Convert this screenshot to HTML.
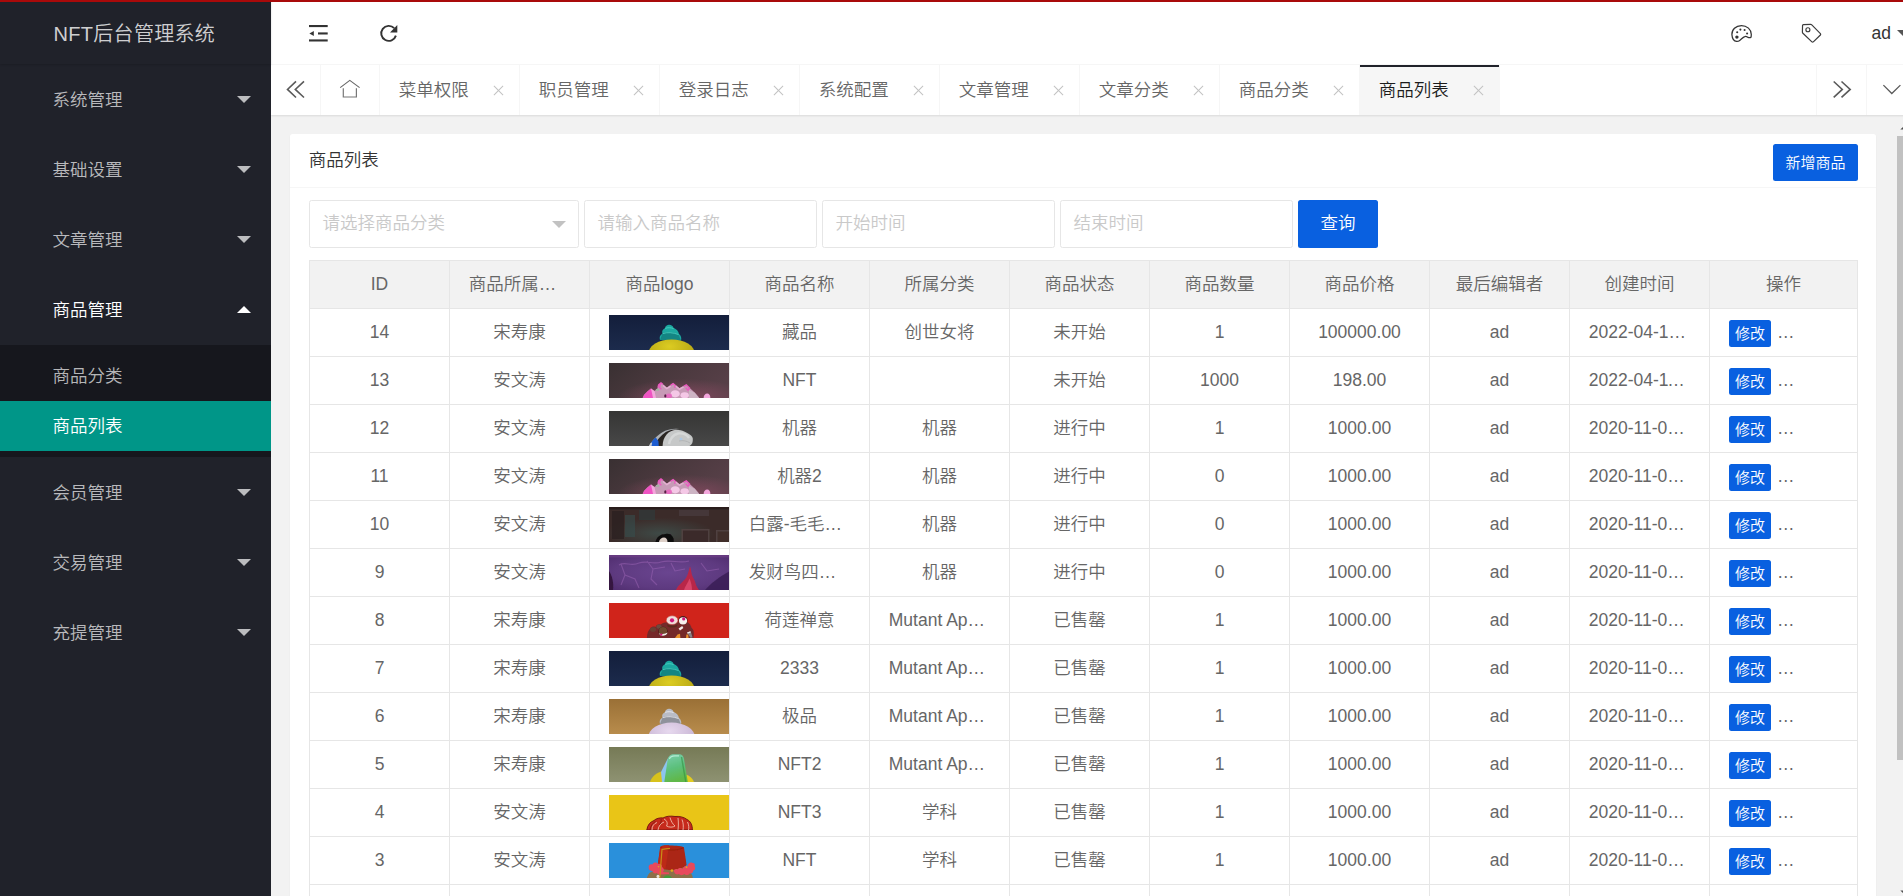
<!DOCTYPE html>
<html lang="zh-CN">
<head>
<meta charset="utf-8">
<title>NFT后台管理系统</title>
<style>
*{box-sizing:border-box;margin:0;padding:0}
html,body{width:1903px;height:896px;overflow:hidden;background:#f2f2f2}
body{position:relative;font-family:"Liberation Sans","Noto Sans CJK SC",sans-serif;font-size:17.5px;color:#333;line-height:1;font-weight:350}
#app{position:absolute;left:0;top:0;width:1917px;height:896px;overflow:hidden}
.abs{position:absolute}
/* top red bar */
#redbar{position:absolute;left:0;top:0;width:1917px;height:2px;background:#a90a0a;z-index:50}
/* side */
#side{position:absolute;left:0;top:0;width:271px;height:896px;background:#20222a;z-index:20}
#logo{position:absolute;left:0;top:0;width:271px;height:64px;line-height:68px;padding-left:53.5px;letter-spacing:.3px;font-size:20px;color:rgba(255,255,255,.8);box-shadow:0 1px 2px 0 rgba(0,0,0,.15);white-space:nowrap}
.mi{position:absolute;left:0;width:271px;height:70px;line-height:72px;padding-left:52.5px;color:rgba(255,255,255,.7);font-size:17.5px;white-space:nowrap}
.mi.open{color:#fff}
.mi i{position:absolute;left:236.5px;top:32px;width:0;height:0;border:7.5px solid transparent;border-top-color:rgba(255,255,255,.7)}
.mi.open i{top:24.5px;border-top-color:transparent;border-bottom-color:#fff}
#sub{position:absolute;left:0;top:345px;width:271px;height:112px;background:rgba(0,0,0,.3)}
.si{position:absolute;left:0;width:271px;height:50px;line-height:50px;padding-left:52.5px;color:rgba(255,255,255,.7);white-space:nowrap}
.si.on{background:#009688;color:#fff}
/* header */
#header{position:absolute;left:271px;top:0;width:1646px;height:65px;background:#fff;border-bottom:1px solid #f6f6f6;z-index:10}
#header svg{position:absolute;display:block}
#user{position:absolute;left:1600.5px;top:0;height:64px;line-height:67px;font-size:17.5px;color:#333;white-space:nowrap}
#user i{position:absolute;left:25.5px;top:30px;width:0;height:0;border:7.5px solid transparent;border-top-color:#555}
/* tabs */
#tabs{position:absolute;left:271px;top:65px;width:1646px;height:50px;background:#fff;box-shadow:0 1px 2px 0 rgba(0,0,0,.1);z-index:9}
.tc{position:absolute;top:0;height:50px;width:50px;border-color:#f6f6f6;border-style:solid;border-width:0}
.tab{position:absolute;top:0;height:50px;line-height:50px;border-right:1px solid #f6f6f6;color:#666;white-space:nowrap;padding-left:18.75px}
.tab.on{background:#f6f6f6;color:#1c1c1c}
.tab.on:after{content:"";position:absolute;left:0;top:0;width:100%;height:2px;background:#20222a}
.tab b{position:absolute;right:14px;top:18px;width:14px;height:14px;font-weight:normal}
.tab b:before,.tab b:after{content:"";position:absolute;left:6.5px;top:.5px;width:1px;height:13px;background:#c2c2c2;transform:rotate(45deg)}
.tab b:after{transform:rotate(-45deg)}
/* card */
#card{position:absolute;left:290px;top:134px;width:1586px;height:800px;background:#fff;border-radius:2.5px;box-shadow:0 1px 2px 0 rgba(0,0,0,.05)}
#chead{position:absolute;left:0;top:0;width:100%;height:54px;line-height:52px;padding-left:18.75px;border-bottom:1px solid #f6f6f6;color:#333}
.btn{position:absolute;background:#0960e0;color:#fff;text-align:center;border-radius:2.5px;white-space:nowrap}
.inp{position:absolute;top:66px;height:47.5px;line-height:45.5px;border:1px solid #e6e6e6;border-radius:2.5px;background:#fff;color:#c9c9c9;padding-left:12.5px;white-space:nowrap;overflow:hidden}
.inp i{position:absolute;right:12px;top:19.5px;width:0;height:0;border:7.5px solid transparent;border-top-color:#c2c2c2}
/* table */
#tbl{position:absolute;left:19px;top:126px;width:1549px;height:700px;border:1px solid #e6e6e6;border-bottom:0;background:#fff;color:#666}
.tr{position:absolute;left:0;width:1547px;height:48px;border-bottom:1px solid #e6e6e6}
.tr.h{background:#f2f2f2}
.td{position:absolute;top:0;height:47px;width:140px;border-right:1px solid #e6e6e6;line-height:46px;text-align:center;white-space:nowrap;overflow:hidden;padding:0 18.75px;text-overflow:ellipsis}
.td.last{width:147px;border-right:0;text-align:left;text-overflow:clip}
.c0{left:0}.c1{left:140px}.c2{left:280px}.c3{left:420px}.c4{left:560px}.c5{left:700px}.c6{left:840px}.c7{left:980px}.c8{left:1120px}.c9{left:1260px}.c10{left:1400px}
.td.img{padding:0;text-overflow:clip}
.pic{position:absolute;left:19px;top:6px;width:121px;height:35px;overflow:hidden}
.eb{position:absolute;left:19px;top:11px;width:42px;height:27px;line-height:28.5px;text-align:center;font-size:15px;background:#0960e0;color:#fff;border-radius:2.5px}
.el{position:absolute;left:67px;top:0}
/* scrollbar */
#sb{position:absolute;left:1897px;top:136px;width:20px;height:624px;background:#c1c1c1;z-index:5}
</style>
</head>
<body>
<div id="app">
<div id="redbar"></div>

<div id="side">
  <div id="logo">NFT后台管理系统</div>
  <div class="mi" style="top:64px">系统管理<i></i></div>
  <div class="mi" style="top:134px">基础设置<i></i></div>
  <div class="mi" style="top:204px">文章管理<i></i></div>
  <div class="mi open" style="top:274px">商品管理<i></i></div>
  <div id="sub">
    <div class="si" style="top:6px">商品分类</div>
    <div class="si on" style="top:56px">商品列表</div>
  </div>
  <div class="mi" style="top:457px">会员管理<i></i></div>
  <div class="mi" style="top:527px">交易管理<i></i></div>
  <div class="mi" style="top:597px">充提管理<i></i></div>
</div>

<div id="header">
  <svg style="left:0;top:0" width="1646" height="64" viewBox="271 0 1646 64" fill="none" stroke="#333">
    <g fill="#333" stroke="none"><rect x="309" y="25" width="18.7" height="2.1"/><rect x="318" y="32.4" width="9.7" height="2.1"/><rect x="309" y="39.4" width="18.7" height="2.1"/><path d="M309.4 33.5 L313.8 30.9 L313.8 36.1 Z"/></g>
    <path d="M394.2 28.2 A7.5 7.5 0 1 0 395.9 35.6" stroke-width="1.9"/>
    <path d="M397.3 25.1 L397.3 32.4 L390 32.4 Z" fill="#333" stroke="none"/>
    <path d="M1750.8 37.4 C1749.5 38 1748.3 37.4 1747.4 37 C1746.5 36.5 1745.6 36.3 1744.8 36.6 C1742.8 37.2 1741.5 39.2 1739.7 40.4 C1738.5 41.3 1737.5 41.5 1736.6 41.4 C1734 41.1 1732.2 38.2 1731.9 34.6 C1731.6 29.6 1735.8 25.5 1741.4 25.5 C1747 25.5 1751.3 29.5 1751.3 34.4 C1751.3 35.8 1751.2 36.8 1750.8 37.4 Z" stroke-width="1.25" stroke-linejoin="round"/>
    <g fill="#333" stroke="none"><circle cx="1736.9" cy="37.1" r="1.7"/><circle cx="1737.2" cy="32.2" r="1.05"/><circle cx="1740.4" cy="29.6" r="1.05"/><circle cx="1744.6" cy="30.05" r="1.05"/><circle cx="1747.1" cy="33.5" r="1.05"/></g>
    <path d="M1803.4 24.55 L1810.6 24.4 Q1811.3 24.4 1811.8 24.9 L1820.4 33.7 Q1821 34.4 1820.4 35 L1813.3 41.9 Q1812.6 42.5 1811.9 41.9 L1802.9 33.2 Q1802.4 32.7 1802.4 32 L1802.55 25.4 Q1802.6 24.6 1803.4 24.55 Z" stroke="#3c3c3c" stroke-width="1.2" stroke-linejoin="round"/>
    <circle cx="1807.9" cy="29.7" r="2" stroke="#3c3c3c" stroke-width="1.15"/>
  </svg>
    <div id="user">ad<i></i></div>
</div>

<div id="tabs">
  <svg style="position:absolute;left:0;top:0;display:block" width="1646" height="50" viewBox="0 0 1646 50" fill="none" stroke="#5a5a5a" stroke-width="1.6">
    <path d="M25 16.3 L16.5 24.4 L25 32.5 M33 16.3 L24.3 24.4 L33 32.5"/>
    <path d="M1562.7 16.5 L1571.3 24.4 L1562.7 32.4 M1570.5 16.5 L1579.2 24.4 L1570.5 32.4"/>
    <path d="M1612.4 20.1 L1620.8 28.5 L1629.4 20.1" stroke-width="1.3"/>
    <path d="M69.2 22.6 L78.8 15.4 L88.6 22.6" stroke="#666" stroke-width="1.1"/>
    <path d="M72.3 23.2 V32 H85.4 V23.2" stroke="#777" stroke-width="1.2"/>
  </svg>
  <div class="tc" style="left:0;border-right-width:1px"></div>
  <div class="tab" style="left:50px;width:59px"></div>
  <div class="tab" style="left:109px;width:140px">菜单权限<b></b></div>
  <div class="tab" style="left:249px;width:140px">职员管理<b></b></div>
  <div class="tab" style="left:389px;width:140px">登录日志<b></b></div>
  <div class="tab" style="left:529px;width:140px">系统配置<b></b></div>
  <div class="tab" style="left:669px;width:140px">文章管理<b></b></div>
  <div class="tab" style="left:809px;width:140px">文章分类<b></b></div>
  <div class="tab" style="left:949px;width:140px">商品分类<b></b></div>
  <div class="tab on" style="left:1089px;width:140px">商品列表<b></b></div>
  <div class="tc" style="left:1545px;border-left-width:1px"></div>
  <div class="tc" style="left:1595px;border-left-width:1px"></div>
</div>

<div id="card">
  <div id="chead">商品列表</div>
  <div class="btn" style="left:1483px;top:10px;width:85px;height:37px;line-height:37px;font-size:15px">新增商品</div>
  <div class="inp" style="left:19px;width:270px">请选择商品分类<i></i></div>
  <div class="inp" style="left:294px;width:233px">请输入商品名称</div>
  <div class="inp" style="left:532px;width:233px">开始时间</div>
  <div class="inp" style="left:770px;width:233px">结束时间</div>
  <div class="btn" style="left:1008px;top:66px;width:80px;height:47.5px;line-height:46px">查询</div>

  <div id="tbl">
    <div class="tr h" style="top:0">
      <div class="td c0">ID</div><div class="td c1">商品所属用户</div><div class="td c2">商品logo</div><div class="td c3">商品名称</div><div class="td c4">所属分类</div><div class="td c5">商品状态</div><div class="td c6">商品数量</div><div class="td c7">商品价格</div><div class="td c8">最后编辑者</div><div class="td c9">创建时间</div><div class="td c10 last" style="text-align:center">操作</div>
    </div>
    <div class="tr" style="top:48px"><div class="td c0">14</div><div class="td c1">宋寿康</div><div class="td c2 img"><svg class="pic" viewBox="0 0 121 35" width="121" height="35" preserveAspectRatio="none"><defs><linearGradient id="g1" x1="0" y1="0" x2="0" y2="1"><stop offset="0" stop-color="#131e3b"/><stop offset="1" stop-color="#1c2b4c"/></linearGradient><radialGradient id="g2" cx=".45" cy=".25" r=".7"><stop offset="0" stop-color="#dccc22"/><stop offset="1" stop-color="#b0a012"/></radialGradient></defs><rect width="121" height="35" fill="url(#g1)"/><path d="M51 25 C50 21 52 19.5 53.5 18.5 C52.5 15.5 54.5 14 56 13.3 C56 10.8 58.5 9.6 60.2 9.7 C62.5 9.8 64 11 64.5 12.8 C67.5 14 69.5 16.5 70 19 C72 20.5 72.8 23 72 25.5 Z" fill="#1ca8a0"/><path d="M53.5 18.5 C57 16.5 63 16.5 69.5 19.5 L72 25.5 L51 25 Z" fill="#148583"/><path d="M56.2 13.4 C59 12.3 62 12.6 64.6 13.6 M53.8 18.6 C58 17 64 17.4 69.6 19.6" stroke="#4fd8c8" stroke-width="1" fill="none" opacity=".75"/><ellipse cx="62.6" cy="38.6" rx="23.2" ry="14.2" fill="url(#g2)"/></svg></div><div class="td c3">藏品</div><div class="td c4">创世女将</div><div class="td c5">未开始</div><div class="td c6">1</div><div class="td c7">100000.00</div><div class="td c8">ad</div><div class="td c9">2022-04-12 15:32:10</div><div class="td c10 last"><span class="eb">修改</span><span class="el">…</span></div></div>
    <div class="tr" style="top:96px"><div class="td c0">13</div><div class="td c1">安文涛</div><div class="td c2 img"><svg class="pic" viewBox="0 0 121 35" width="121" height="35" preserveAspectRatio="none"><defs><linearGradient id="g3" x1="0" y1="0" x2="1" y2=".35"><stop offset="0" stop-color="#393032"/><stop offset=".5" stop-color="#49383d"/><stop offset="1" stop-color="#563f47"/></linearGradient><radialGradient id="g4" cx=".62" cy="1" r=".55"><stop offset="0" stop-color="#a0506e" stop-opacity=".6"/><stop offset="1" stop-color="#a0506e" stop-opacity="0"/></radialGradient><filter id="g5" x="-5%" y="-20%" width="110%" height="140%"><feGaussianBlur stdDeviation=".55"/></filter></defs><rect width="121" height="35" fill="url(#g3)"/><rect width="121" height="35" fill="url(#g4)"/><g filter="url(#g5)"><path d="M33.7 35 L35 32 L38.4 28.5 L42 25.6 L45 28 L48 26.5 L49.5 22 L52 19.8 L55 22 L57.8 24.8 L61 22.5 L64.1 20.6 L67 22.6 L70.4 25.3 L74 23.4 L77.3 21.9 L81 25.3 L85.7 29.5 L89.9 34.3 L90 35 Z" fill="#c79ab6"/><path d="M33.7 35 L35 32 L38.4 28.5 L42 25.6 L44 28 L46.5 35 Z" fill="#ef52c2"/><path d="M42 25.6 L45.5 28 L47 35 L44 35 Z" fill="#f3a6dc"/><path d="M49 24.5 L49.6 21.8 L52 19.8 L54 21.4 M51.6 20.2 L50.6 24.6 L52.4 26.2" stroke="#ec58c0" stroke-width="1.3" fill="none"/><path d="M61.6 22.4 L64.1 20.6 L66.6 22.6 L65.4 24.6" stroke="#ec58c0" stroke-width="1.3" fill="none"/><path d="M74.6 23.4 L77.3 21.9 L80.6 25 L79 27.2 L76.6 24.6" stroke="#ec58c0" stroke-width="1.3" fill="none"/><path d="M54 22.5 L57.8 25.6 L61.6 23 M66.8 23 L70.4 26.2 L74.6 23.8" stroke="#e9b4d6" stroke-width="1.6" fill="none" opacity=".85"/><ellipse cx="66.2" cy="30.8" rx="4.6" ry="3.6" fill="#fbd0ee" opacity=".85"/><ellipse cx="75.7" cy="32.2" rx="4.2" ry="3" fill="#fbd0ee" opacity=".85"/><ellipse cx="60" cy="33" rx="3" ry="2.4" fill="#ec62c2" opacity=".8"/><path d="M80 27 L85.7 29.8 L89.6 34.6 L89.6 35 L80 35 Z" fill="#cdb4c4"/><ellipse cx="48.4" cy="26.9" rx="1.8" ry="1.2" fill="#a8b0a4"/><ellipse cx="56.3" cy="32.9" rx="1.1" ry="1.6" fill="#5a1e46"/><path d="M94.6 35 C94.6 32.4 96.4 30.6 98.2 30.6 C100 30.6 101.4 32.4 101.4 35 Z" fill="#f3a6dc"/></g></svg></div><div class="td c3">NFT</div><div class="td c4"></div><div class="td c5">未开始</div><div class="td c6">1000</div><div class="td c7">198.00</div><div class="td c8">ad</div><div class="td c9">2022-04-11 10:21:45</div><div class="td c10 last"><span class="eb">修改</span><span class="el">…</span></div></div>
    <div class="tr" style="top:144px"><div class="td c0">12</div><div class="td c1">安文涛</div><div class="td c2 img"><svg class="pic" viewBox="0 0 121 35" width="121" height="35" preserveAspectRatio="none"><defs><linearGradient id="g6" x1="0" y1="0" x2="0" y2="1"><stop offset="0" stop-color="#353534"/><stop offset="1" stop-color="#484848"/></linearGradient><filter id="g7" x="-5%" y="-20%" width="110%" height="140%"><feGaussianBlur stdDeviation=".5"/></filter></defs><rect width="121" height="35" fill="url(#g6)"/><g filter="url(#g7)"><path d="M40 35 C43 30 48 24.5 53 21.5 C57 19 62 18 67 17.8 L70.4 18 C64 19 58.5 22 55 27 C53.5 29.5 53 32 53.2 35 Z" fill="#aeb2b6"/><path d="M44.5 35 C48 29 52 24.5 56.8 21 C60.5 18.8 65 18.2 70.4 18.2 C65 19.6 60 22.4 57 26.6 C55.2 29.2 54.4 32 54.4 35 Z" fill="#2a2624"/><path d="M53.6 35 C53.8 30 55 26.5 57.6 23.4 C60 20.8 63.5 19 67.3 18.8 C70.5 18.8 73 19.6 75.2 20.6 C78 22 80.5 23.4 82 24.6 C83.4 25.8 84 27.4 83.8 28.8 C83.8 30.5 83.4 32 83 32.6 C82.4 33.8 81.4 34.6 80.4 35 Z" fill="#c6c8c8"/><path d="M60 33 C61 28 64 24 69 22.5 C74 22 78 24 80 27" stroke="#dadcdc" stroke-width="2.4" fill="none" opacity=".8"/><path d="M70 30 C74 29 78 30 81 32" stroke="#aeb0b2" stroke-width="1" fill="none" opacity=".8"/><ellipse cx="72" cy="28" rx="1.4" ry="1.2" fill="#a8c8ea" opacity=".8"/><path d="M41 35 L42.5 31 L45.5 27.6 L47 26.6 L48 28.4 L49.4 30 L49.8 35 Z" fill="#1a5cd0"/><path d="M40 35 L41.6 32 L43.2 31.4 L42.6 35 Z" fill="#c8ccd0"/></g></svg></div><div class="td c3">机器</div><div class="td c4">机器</div><div class="td c5">进行中</div><div class="td c6">1</div><div class="td c7">1000.00</div><div class="td c8">ad</div><div class="td c9">2020-11-06 14:20:11</div><div class="td c10 last"><span class="eb">修改</span><span class="el">…</span></div></div>
    <div class="tr" style="top:192px"><div class="td c0">11</div><div class="td c1">安文涛</div><div class="td c2 img"><svg class="pic" viewBox="0 0 121 35" width="121" height="35" preserveAspectRatio="none"><defs><linearGradient id="g8" x1="0" y1="0" x2="1" y2=".35"><stop offset="0" stop-color="#393032"/><stop offset=".5" stop-color="#49383d"/><stop offset="1" stop-color="#563f47"/></linearGradient><radialGradient id="g9" cx=".62" cy="1" r=".55"><stop offset="0" stop-color="#a0506e" stop-opacity=".6"/><stop offset="1" stop-color="#a0506e" stop-opacity="0"/></radialGradient><filter id="g10" x="-5%" y="-20%" width="110%" height="140%"><feGaussianBlur stdDeviation=".55"/></filter></defs><rect width="121" height="35" fill="url(#g8)"/><rect width="121" height="35" fill="url(#g9)"/><g filter="url(#g10)"><path d="M33.7 35 L35 32 L38.4 28.5 L42 25.6 L45 28 L48 26.5 L49.5 22 L52 19.8 L55 22 L57.8 24.8 L61 22.5 L64.1 20.6 L67 22.6 L70.4 25.3 L74 23.4 L77.3 21.9 L81 25.3 L85.7 29.5 L89.9 34.3 L90 35 Z" fill="#c79ab6"/><path d="M33.7 35 L35 32 L38.4 28.5 L42 25.6 L44 28 L46.5 35 Z" fill="#ef52c2"/><path d="M42 25.6 L45.5 28 L47 35 L44 35 Z" fill="#f3a6dc"/><path d="M49 24.5 L49.6 21.8 L52 19.8 L54 21.4 M51.6 20.2 L50.6 24.6 L52.4 26.2" stroke="#ec58c0" stroke-width="1.3" fill="none"/><path d="M61.6 22.4 L64.1 20.6 L66.6 22.6 L65.4 24.6" stroke="#ec58c0" stroke-width="1.3" fill="none"/><path d="M74.6 23.4 L77.3 21.9 L80.6 25 L79 27.2 L76.6 24.6" stroke="#ec58c0" stroke-width="1.3" fill="none"/><path d="M54 22.5 L57.8 25.6 L61.6 23 M66.8 23 L70.4 26.2 L74.6 23.8" stroke="#e9b4d6" stroke-width="1.6" fill="none" opacity=".85"/><ellipse cx="66.2" cy="30.8" rx="4.6" ry="3.6" fill="#fbd0ee" opacity=".85"/><ellipse cx="75.7" cy="32.2" rx="4.2" ry="3" fill="#fbd0ee" opacity=".85"/><ellipse cx="60" cy="33" rx="3" ry="2.4" fill="#ec62c2" opacity=".8"/><path d="M80 27 L85.7 29.8 L89.6 34.6 L89.6 35 L80 35 Z" fill="#cdb4c4"/><ellipse cx="48.4" cy="26.9" rx="1.8" ry="1.2" fill="#a8b0a4"/><ellipse cx="56.3" cy="32.9" rx="1.1" ry="1.6" fill="#5a1e46"/><path d="M94.6 35 C94.6 32.4 96.4 30.6 98.2 30.6 C100 30.6 101.4 32.4 101.4 35 Z" fill="#f3a6dc"/></g></svg></div><div class="td c3">机器2</div><div class="td c4">机器</div><div class="td c5">进行中</div><div class="td c6">0</div><div class="td c7">1000.00</div><div class="td c8">ad</div><div class="td c9">2020-11-06 14:18:32</div><div class="td c10 last"><span class="eb">修改</span><span class="el">…</span></div></div>
    <div class="tr" style="top:240px"><div class="td c0">10</div><div class="td c1">安文涛</div><div class="td c2 img"><svg class="pic" viewBox="0 0 121 35" width="121" height="35" preserveAspectRatio="none"><defs><radialGradient id="g11" cx=".42" cy=".75" r=".45"><stop offset="0" stop-color="#3f5450" stop-opacity=".75"/><stop offset="1" stop-color="#3f5450" stop-opacity="0"/></radialGradient><filter id="g12" x="-5%" y="-20%" width="110%" height="140%"><feGaussianBlur stdDeviation=".5"/></filter></defs><rect width="121" height="35" fill="#3b2b29"/><rect width="121" height="35" fill="url(#g11)"/><g filter="url(#g12)"><rect x="0" y="0" width="121" height="2.5" fill="#1c1414" opacity=".6"/><rect x="3" y="4" width="12" height="28" fill="#2c2020" opacity=".8"/><rect x="16" y="8" width="10" height="22" fill="#34504e" opacity=".55"/><rect x="30" y="3" width="16" height="10" fill="#2e3c3c" opacity=".6"/><rect x="72.5" y="22" width="28" height="13" fill="#4f413f"/><rect x="74" y="23.5" width="25" height="11.5" fill="#3a2c2c"/><rect x="107" y="23" width="14" height="12" fill="#4f413f"/><rect x="108.5" y="24.5" width="12.5" height="10.5" fill="#402e2a"/><rect x="70" y="3" width="30" height="6" fill="#4a3c3e" opacity=".7"/><path d="M46.5 35 C47.5 30 51.5 27 56.5 27 C60 26.5 62.5 27.5 63 29 C64.5 30.5 65 33 64.8 35 Z" fill="#0d0a0b"/><path d="M50 35 C50.5 32 52.5 30.5 55 30.5 C57 30.5 58.5 32 58.5 35 Z" fill="#ddd0c8"/></g></svg></div><div class="td c3">白露-毛毛虫系列</div><div class="td c4">机器</div><div class="td c5">进行中</div><div class="td c6">0</div><div class="td c7">1000.00</div><div class="td c8">ad</div><div class="td c9">2020-11-06 14:15:08</div><div class="td c10 last"><span class="eb">修改</span><span class="el">…</span></div></div>
    <div class="tr" style="top:288px"><div class="td c0">9</div><div class="td c1">安文涛</div><div class="td c2 img"><svg class="pic" viewBox="0 0 121 35" width="121" height="35" preserveAspectRatio="none"><defs><radialGradient id="g13" cx=".5" cy=".5" r=".75"><stop offset="0" stop-color="#6a4590"/><stop offset=".6" stop-color="#5e3a80"/><stop offset="1" stop-color="#4c2a6a"/></radialGradient><filter id="g14" x="-5%" y="-20%" width="110%" height="140%"><feGaussianBlur stdDeviation=".5"/></filter></defs><rect width="121" height="35" fill="url(#g13)"/><g filter="url(#g14)"><path d="M10 10 C16 6 22 12 30 8 C38 5 44 10 52 7 C62 4 70 9 80 6 M12 9 L16 20 L12 30 M16 20 L26 24 L30 33 M38 6 L44 14 L56 12 M44 14 L42 24 L48 30 M62 8 L66 16 L76 14 M92 8 L98 16 L110 14" stroke="#b070c4" stroke-width="1.1" fill="none" opacity=".38"/><path d="M0 16 C3 20 5 28 4 35 L0 35 Z" fill="#34183f"/><path d="M96 35 C102 28 110 22 121 16 L121 35 Z" fill="#3c2058" opacity=".9"/><path d="M0 0 L121 0 L121 2.5 L0 2.5 Z" fill="#6e3f86" opacity=".7"/><path d="M67 35 C69 30 74 27 77 23 C79.5 19 80 14 81 11.3 C82.5 15 82 19 84 22.5 C86 26 86.5 28 87 30 C88 32 89 33.5 90 35 Z" fill="#b82848"/><path d="M75 35 C76 31 79 28 80.5 23.5 C82 27 83 31 83 35 Z" fill="#d8446a"/></g></svg></div><div class="td c3">发财鸟四季系列</div><div class="td c4">机器</div><div class="td c5">进行中</div><div class="td c6">0</div><div class="td c7">1000.00</div><div class="td c8">ad</div><div class="td c9">2020-11-06 14:12:40</div><div class="td c10 last"><span class="eb">修改</span><span class="el">…</span></div></div>
    <div class="tr" style="top:336px"><div class="td c0">8</div><div class="td c1">宋寿康</div><div class="td c2 img"><svg class="pic" viewBox="0 0 121 35" width="121" height="35" preserveAspectRatio="none"><defs><filter id="g15" x="-5%" y="-20%" width="110%" height="140%"><feGaussianBlur stdDeviation=".35"/></filter></defs><rect width="121" height="35" fill="#d0241b"/><g filter="url(#g15)"><path d="M37.9 35 C38 31 39 27.5 41 25.7 C42.5 23.5 45 23.2 46.5 24 C47 21.8 49.5 20.6 51.5 21.4 C53.5 20 56 19.2 58 19.2 L78.5 19 C80.5 20.5 82 22.5 82.5 24.8 C84 26 84.9 27.8 84.7 29.2 C85 31 84.8 33 84.3 35 Z" fill="#742a2c"/><ellipse cx="44" cy="26.5" rx="3" ry="2.3" fill="#6a4032"/><ellipse cx="50" cy="23.6" rx="2.6" ry="2.2" fill="#6e4a3c"/><path d="M58 21.3 C60.5 23.2 66 23.2 68.6 21.4 L68 23.6 C65 24.8 61 24.8 58.6 23.4 Z" fill="#5a2a1c"/><ellipse cx="63.1" cy="17.2" rx="5.8" ry="4.4" fill="#f0dedb"/><ellipse cx="63.1" cy="17.2" rx="5.8" ry="4.4" fill="none" stroke="#c4504a" stroke-width=".6"/><circle cx="63" cy="17.3" r="2.1" fill="#d01878"/><ellipse cx="74" cy="17.2" rx="4.6" ry="4.3" fill="#4a1c18"/><ellipse cx="74" cy="17.8" rx="4.1" ry="3.6" fill="#f6f2f0"/><circle cx="74.7" cy="15.9" r="1.6" fill="#d01878"/><circle cx="54" cy="28.4" r="4.6" fill="#3a1612"/><circle cx="54" cy="28.2" r="4.1" fill="#70482e"/><path d="M49.8 30.2 C51 33.6 57.5 33.8 58.6 29.6 C56.5 31.2 52.5 31.6 49.8 30.2 Z" fill="#f2ece8"/><circle cx="52.2" cy="31.6" r="1.2" fill="#d01878"/><path d="M69.6 25.6 L73.2 23 L74.4 25 L71 27.4 Z" fill="#f2ece8"/><path d="M66 35 L68.5 31.4 L71 30.8 L71.4 35 Z" fill="#e8922e"/><path d="M77 35 L77.4 31.6 L79.2 31.4 L79.6 35 Z" fill="#e8922e"/><path d="M78.2 29.6 L81.6 28.2 L83.6 34.4 L81.4 34.8 Z" fill="#8a8486"/><path d="M78 29.4 L81.4 28.2 L81.8 29.6 L78.6 30.8 Z" fill="#efe8e6"/></g></svg></div><div class="td c3">荷莲禅意</div><div class="td c4">Mutant Ape Yacht Club</div><div class="td c5">已售罄</div><div class="td c6">1</div><div class="td c7">1000.00</div><div class="td c8">ad</div><div class="td c9">2020-11-05 18:02:13</div><div class="td c10 last"><span class="eb">修改</span><span class="el">…</span></div></div>
    <div class="tr" style="top:384px"><div class="td c0">7</div><div class="td c1">宋寿康</div><div class="td c2 img"><svg class="pic" viewBox="0 0 121 35" width="121" height="35" preserveAspectRatio="none"><defs><linearGradient id="g16" x1="0" y1="0" x2="0" y2="1"><stop offset="0" stop-color="#131e3b"/><stop offset="1" stop-color="#1c2b4c"/></linearGradient><radialGradient id="g17" cx=".45" cy=".25" r=".7"><stop offset="0" stop-color="#dccc22"/><stop offset="1" stop-color="#b0a012"/></radialGradient></defs><rect width="121" height="35" fill="url(#g16)"/><path d="M51 25 C50 21 52 19.5 53.5 18.5 C52.5 15.5 54.5 14 56 13.3 C56 10.8 58.5 9.6 60.2 9.7 C62.5 9.8 64 11 64.5 12.8 C67.5 14 69.5 16.5 70 19 C72 20.5 72.8 23 72 25.5 Z" fill="#1ca8a0"/><path d="M53.5 18.5 C57 16.5 63 16.5 69.5 19.5 L72 25.5 L51 25 Z" fill="#148583"/><path d="M56.2 13.4 C59 12.3 62 12.6 64.6 13.6 M53.8 18.6 C58 17 64 17.4 69.6 19.6" stroke="#4fd8c8" stroke-width="1" fill="none" opacity=".75"/><ellipse cx="62.6" cy="38.6" rx="23.2" ry="14.2" fill="url(#g17)"/></svg></div><div class="td c3">2333</div><div class="td c4">Mutant Ape Yacht Club</div><div class="td c5">已售罄</div><div class="td c6">1</div><div class="td c7">1000.00</div><div class="td c8">ad</div><div class="td c9">2020-11-05 17:55:27</div><div class="td c10 last"><span class="eb">修改</span><span class="el">…</span></div></div>
    <div class="tr" style="top:432px"><div class="td c0">6</div><div class="td c1">宋寿康</div><div class="td c2 img"><svg class="pic" viewBox="0 0 121 35" width="121" height="35" preserveAspectRatio="none"><defs><linearGradient id="g18" x1="0" y1="0" x2="0" y2="1"><stop offset="0" stop-color="#9a7036"/><stop offset="1" stop-color="#b88c4c"/></linearGradient><radialGradient id="g19" cx=".45" cy=".3" r=".7"><stop offset="0" stop-color="#e6d8ee"/><stop offset="1" stop-color="#c4b0d0"/></radialGradient></defs><rect width="121" height="35" fill="url(#g18)"/><path d="M51 25 C50 21 52 19.5 53.5 18.5 C52.5 15.5 54.5 14 56 13.3 C56 10.8 58.5 9.6 60.2 9.7 C62.5 9.8 64 11 64.5 12.8 C67.5 14 69.5 16.5 70 19 C72 20.5 72.8 23 72 25.5 Z" fill="#b9bcc6"/><path d="M53.5 18.5 C57 16.5 63 16.5 69.5 19.5 L72 25.5 L51 25 Z" fill="#8f929c"/><path d="M56.2 13.4 C59 12.3 62 12.6 64.6 13.6 M53.8 18.6 C58 17 64 17.4 69.6 19.6" stroke="#f2f2f6" stroke-width="1" fill="none" opacity=".75"/><ellipse cx="62.6" cy="38" rx="23.2" ry="14.4" fill="url(#g19)"/></svg></div><div class="td c3">极品</div><div class="td c4">Mutant Ape Yacht Club</div><div class="td c5">已售罄</div><div class="td c6">1</div><div class="td c7">1000.00</div><div class="td c8">ad</div><div class="td c9">2020-11-05 17:48:50</div><div class="td c10 last"><span class="eb">修改</span><span class="el">…</span></div></div>
    <div class="tr" style="top:480px"><div class="td c0">5</div><div class="td c1">宋寿康</div><div class="td c2 img"><svg class="pic" viewBox="0 0 121 35" width="121" height="35" preserveAspectRatio="none"><defs><linearGradient id="g20" x1="0" y1="0" x2="0" y2="1"><stop offset="0" stop-color="#767a56"/><stop offset="1" stop-color="#8e9272"/></linearGradient><linearGradient id="g21" x1="0" y1="0" x2=".25" y2="1"><stop offset="0" stop-color="#7ccfae"/><stop offset=".55" stop-color="#5cc07c"/><stop offset="1" stop-color="#60b84a"/></linearGradient><filter id="g22" x="-5%" y="-20%" width="110%" height="140%"><feGaussianBlur stdDeviation=".4"/></filter></defs><rect width="121" height="35" fill="url(#g20)"/><g filter="url(#g22)"><path d="M41 35 C43 29 48 25 54 24.5 C58 24.5 60 26 61 28 L62 35 Z" fill="#d8c21a"/><path d="M74 35 L75 27.5 C79 27.5 83 30 85 35 Z" fill="#e2cc20"/><path d="M52 25 L58.5 12 L61 9 L57 35 L53 35 Z" fill="#8cc4ee"/><path d="M55.3 35 L58.6 13 C59.2 9 61.5 7.4 65 7.3 L70 7.3 C73 7.4 74.4 9 75 12 L78.8 35 Z" fill="url(#g21)"/><path d="M60.5 12 C61 9.5 63 8.8 66 8.8 L70 8.8" stroke="#c4f4e0" stroke-width="1.2" fill="none" opacity=".8"/><path d="M72.5 10 L76.8 35" stroke="#2f8a3c" stroke-width="1.4" fill="none" opacity=".55"/></g></svg></div><div class="td c3">NFT2</div><div class="td c4">Mutant Ape Yacht Club</div><div class="td c5">已售罄</div><div class="td c6">1</div><div class="td c7">1000.00</div><div class="td c8">ad</div><div class="td c9">2020-11-05 17:40:02</div><div class="td c10 last"><span class="eb">修改</span><span class="el">…</span></div></div>
    <div class="tr" style="top:528px"><div class="td c0">4</div><div class="td c1">安文涛</div><div class="td c2 img"><svg class="pic" viewBox="0 0 121 35" width="121" height="35" preserveAspectRatio="none"><rect width="121" height="35" fill="#e9c517"/><path d="M37.8 35 C38.5 30 41 27 45 25.5 C47 23.5 51 22.5 54 23 C57 21 62 20.8 66 21.5 C70 21 75 22 78 24.5 C81.5 26 83.5 30 83.4 35 Z" fill="#c62a1c" stroke="#6e120e" stroke-width=".9"/><path d="M43 35 C43 31 45 28.5 48 27.5 M49 35 C49.5 31 52 28 55 27 M55 24 C58 25.5 59 28.5 57.5 31 C60 32.5 64 32.5 66 31 M61 22.5 C62 26 63.5 29 66 31 M69 23 C69.5 27 69.5 31 69 35 M73 24.5 C74.5 28 74.5 32 74 35 M78.5 27 C80 30 80 33 79.5 35" stroke="#f4c8b8" stroke-width=".9" fill="none" opacity=".9"/><path d="M41 35 C41.5 31 43.5 28 46.5 26.5 M52 24 C52.5 26 52 28 50.5 29.5" stroke="#7a1610" stroke-width=".8" fill="none"/></svg></div><div class="td c3">NFT3</div><div class="td c4">学科</div><div class="td c5">已售罄</div><div class="td c6">1</div><div class="td c7">1000.00</div><div class="td c8">ad</div><div class="td c9">2020-11-04 11:30:44</div><div class="td c10 last"><span class="eb">修改</span><span class="el">…</span></div></div>
    <div class="tr" style="top:576px"><div class="td c0">3</div><div class="td c1">安文涛</div><div class="td c2 img"><svg class="pic" viewBox="0 0 121 35" width="121" height="35" preserveAspectRatio="none"><defs><filter id="g23" x="-5%" y="-20%" width="110%" height="140%"><feGaussianBlur stdDeviation=".3"/></filter></defs><rect width="121" height="35" fill="#2a90db"/><g filter="url(#g23)"><path d="M37.9 35 C38.5 32 40 30 42.5 28.8 L80 28 C82 29.5 83.5 32 83.8 35 Z" fill="#8c7048"/><rect x="52" y="24" width="25" height="7" fill="#8c7048"/><path d="M48.6 23 L51.2 4.2 C51.6 2.6 55 2.2 61 2.4 C67 2.5 73.5 3 74.9 4.2 L77.6 22.1 C75 25 68 27 62.9 27 C57 27 51 25.5 48.6 23 Z" fill="#ab2513"/><path d="M48.6 23 L51.2 4.2 C53 3 57 2.6 60 2.6 L56.5 26 C53 25.4 50 24.4 48.6 23 Z" fill="#c02b15" opacity=".8"/><path d="M51.6 4.4 C56 7.5 68 8.2 74.6 4.6" stroke="#8a1c0e" stroke-width=".7" fill="none"/><path d="M39.8 25 C39 22.5 41.5 20.5 43.5 21.5 C44.5 19 48 19 49 21 C51 20 53.5 21.5 53 24 C55 25 55.5 27.5 54 29 L60 29.5 L60 31 L52 31.5 C50.5 32 48.5 31.5 48 30 C46 31 43.5 30 43.5 28 C41 28 39.5 26.5 39.8 25 Z" fill="#e8485c"/><path d="M64.6 28.5 C64.6 26.5 67 25.5 68.5 26.5 C69.5 24.5 72.5 24.5 73.5 26 C74.5 23.5 77 22.5 78.5 23.5 C78.5 20.5 81.5 18.5 83.5 20 C85.5 19.5 86.5 22 85.5 23.5 C87 25 86 27.5 84 27.5 C84.5 29.5 82.5 31 80.5 30.5 C79.5 32.5 76.5 32.5 75.5 31 C74 32.5 71 32.5 70 31 C68 32 65.5 31 65.5 29.5 Z" fill="#e8485c"/><circle cx="62.9" cy="27.6" r="1.3" fill="#e0a81e"/><circle cx="77.5" cy="24.2" r=".9" fill="#e0a81e"/><circle cx="49.5" cy="23.8" r=".8" fill="#e0a81e"/><path d="M61 5.4 L53 6.3 L50.8 35" stroke="#c89018" stroke-width="1.2" fill="none"/><path d="M54.5 35 C55 33 57 32.5 59 32.6 C61 32.6 62.5 33.5 62.8 35 Z" fill="#3f9c3a"/><ellipse cx="49" cy="33.4" rx="1.5" ry="1.6" fill="#e8e2d8"/></g></svg></div><div class="td c3">NFT</div><div class="td c4">学科</div><div class="td c5">已售罄</div><div class="td c6">1</div><div class="td c7">1000.00</div><div class="td c8">ad</div><div class="td c9">2020-11-04 11:22:19</div><div class="td c10 last"><span class="eb">修改</span><span class="el">…</span></div></div>
    <div class="tr" style="top:624px"><div class="td c0">2</div><div class="td c1">安文涛</div><div class="td c2 img"></div><div class="td c3">NFT</div><div class="td c4">学科</div><div class="td c5">已售罄</div><div class="td c6">1</div><div class="td c7">1000.00</div><div class="td c8">ad</div><div class="td c9">2020-11-04 11:10:05</div><div class="td c10 last"><span class="eb">修改</span><span class="el">…</span></div></div>
  </div>
</div>

<div id="sb"></div>
<svg style="position:absolute;left:1895px;top:115px;z-index:6" width="22" height="781" viewBox="1895 115 22 781"><path d="M1900.3 129.6 L1905.5 124.4 L1910.7 129.6 Z M1900.3 890.4 L1905.5 895.6 L1910.7 890.4 Z" fill="#505050"/></svg>
</div>
</body>
</html>
